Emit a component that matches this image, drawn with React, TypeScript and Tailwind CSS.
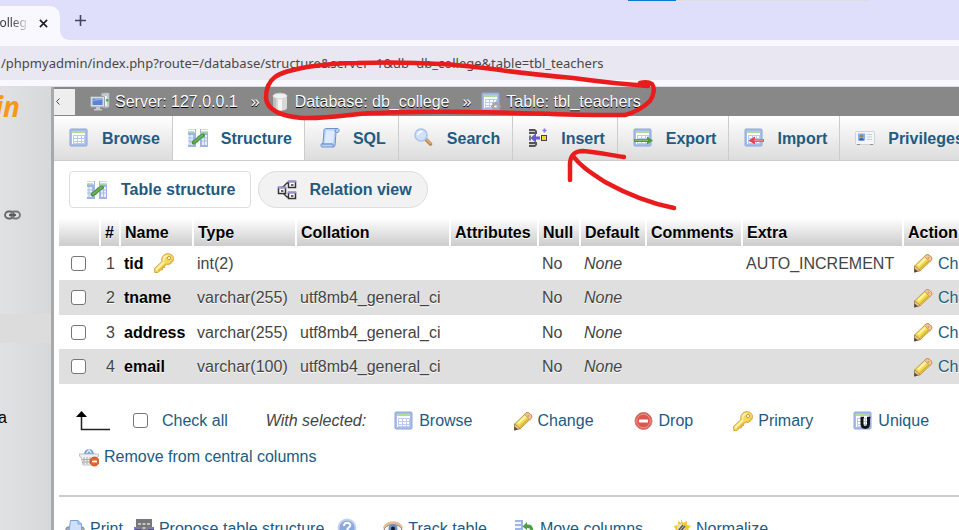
import type { ReactNode } from "react";

const sans = "font-['Liberation_Sans',Arial,sans-serif]";
const segoe = "font-['Noto_Sans','Open_Sans',sans-serif]";

function Svg({ children, className = "size-5" }: { children: ReactNode; className?: string }) {
  return (
    <svg viewBox="0 0 20 20" className={`${className} shrink-0`} fill="none" aria-hidden="true">
      {children}
    </svg>
  );
}

function Sheet() {
  return (
    <>
      <rect x="1" y="1" width="17" height="17" rx="1" fill="#a9bde8" stroke="#8ea6dc" />
      <rect x="3" y="3" width="13" height="13" fill="#fff" />
      <path d="M3 4h13" stroke="#8fcf7c" strokeWidth="1.5" />
      <path d="M4 7h12v9H4z" fill="#b9cbf0" />
      <path d="M5 8h3v2H5zM9 8h3v2H9zM13 8h2v2h-2zM5 11h3v2H5zM9 11h3v2H9zM13 11h2v2h-2zM5 14h3v1H5zM9 14h3v1H9zM13 14h2v1h-2z" fill="#fff" />
    </>
  );
}

const BrowseIcon = () => (
  <Svg>
    <Sheet />
  </Svg>
);

const StructureIcon = () => (
  <Svg>
    <rect x="0" y="1" width="8" height="18" fill="#9db4e4" />
    <rect x="12" y="1" width="8" height="18" fill="#9db4e4" />
    <path d="M0 3h7M13 3h7" stroke="#fff" strokeWidth="3" />
    <path d="M0 4h6M13 4h7" stroke="#7fc66b" strokeWidth="1.2" />
    <path d="M0 7h5v10H0zM14 7h5v10h-5z" fill="#e9effb" />
    <path d="M0 10h5M0 13h5M14 10h5M14 13h5M2 7v10M16.500 7v10" stroke="#9db4e4" strokeWidth=".8" />
    <path d="M5.500 14.500l3-2 3.500-3.500 3-1.500" stroke="#4d9540" strokeWidth="4" strokeLinecap="round" strokeLinejoin="round" />
    <path d="M6 14l3-2 3.500-3.500 2-1" stroke="#72b765" strokeWidth="1.500" strokeLinecap="round" />
  </Svg>
);

const SqlIcon = () => (
  <Svg>
    <path d="M4 2c0-1 1-1.500 2-1.500h12c1.500.5 1.500 4-.5 4h-1.500L15 17.500c0 1-1 1.500-2 1.500H2c-1.500-.5-1.500-3 0-3.500h1z" fill="#b9d1f6" stroke="#6f92cf" />
    <path d="M6 2.500h8.500L13 15H4.500z" fill="#deeafd" />
    <path d="M2 16h10.500c1 .5 1 2.500 0 3M16 4.500c-1.200-.5-1-3 .5-3.500" stroke="#5d82c6" />
  </Svg>
);

const SearchIcon = () => (
  <Svg>
    <path d="M12 11.500l4.500 4.500" stroke="#b98245" strokeWidth="3.600" strokeLinecap="round" />
    <path d="M12.500 11.500l4 4" stroke="#e0b27c" strokeWidth="1.500" strokeLinecap="round" />
    <circle cx="7" cy="7" r="6" fill="#cfe2fb" stroke="#a9c3ea" strokeWidth="1.500" />
    <path d="M4 6.500C4.500 4.500 6 3.500 8 3.500" stroke="#fff" strokeWidth="1.500" strokeLinecap="round" />
  </Svg>
);

const InsertIcon = () => (
  <Svg>
    <path d="M1 1h6l2 2v3H1zM1 14h8v3l-2 2H1z" fill="#555" />
    <path d="M1 3.500h6M1 16.500h6" stroke="#ccc" />
    <path d="M1 7.500h2v5H1z" fill="#777" />
    <path d="M2.500 10l5.500-5v3.500h4v3H8V15z" fill="#6a5acd" />
    <rect x="13" y="7" width="6" height="6" fill="#444" />
    <rect x="14" y="8" width="4" height="4" fill="#ffd42a" />
    <path d="M16.500 0.500v4M14.500 2.500h4" stroke="#8a7be0" strokeWidth="1.600" />
  </Svg>
);

const ExportIcon = () => (
  <Svg>
    <Sheet />
    <path d="M1 11h13V8.500l6 4-6 4V14H1z" fill="#4b9a3f" />
    <path d="M2 12.200h13" stroke="#8fd07f" />
  </Svg>
);

const ImportIcon = () => (
  <Svg>
    <Sheet />
    <path d="M20 11.200h-9V8.500l-6.500 4 6.500 4v-2.700h9z" fill="#e0455b" />
    <path d="M19 12.300h-9" stroke="#f59aa6" />
  </Svg>
);

const PrivilegesIcon = () => (
  <Svg>
    <rect x=".5" y="3.500" width="19" height="13" rx="1" fill="#f3f5f8" stroke="#cfd3da" />
    <path d="M2 16.500h3M15 16.500h3" stroke="#8a8f99" />
    <rect x="3" y="5.500" width="7" height="7" fill="#7fb0ea" />
    <circle cx="6.500" cy="8" r="1.600" fill="#b9793c" />
    <path d="M4 12.500c0-3.500 5-3.500 5 0z" fill="#2e66a8" />
    <path d="M12 6.500h5M12 9h5M12 11.500h5" stroke="#c3cfe0" />
  </Svg>
);

const RelationIcon = () => (
  <Svg>
    <path d="M5 8l5-5h2M5 12l5 5h2" stroke="#333" strokeWidth="1.300" />
    <path d="M11.500 1.500h7v6h-7zM11.500 12.500h7v6h-7zM1.500 7.500h7v6h-7z" fill="#fff" stroke="#333" strokeWidth="1.500" />
    <path d="M11 1.500h8M11 12.500h8M1 7.500h8" stroke="#9b8fcf" strokeWidth="2" />
    <path d="M14 5h2.500M14 16h2.500M4 11h2.500" stroke="#333" strokeWidth="1.500" />
  </Svg>
);

const ServerIcon = () => (
  <Svg>
    <path d="M11 1l7-.5 1.500 1v13L18 16h-6z" fill="#c5cad0" stroke="#8e959c" />
    <path d="M16 4v10" stroke="#eef0f2" strokeWidth="2" />
    <rect x="16" y="7" width="2.500" height="2.500" fill="#3eb34a" />
    <rect x=".5" y="4.500" width="14" height="10.500" rx="1" fill="#d9dde2" stroke="#9aa1a9" />
    <rect x="2.500" y="6.500" width="10" height="6.500" fill="#5b83cf" />
    <path d="M3 9c3-2 6-1 9-2" stroke="#8eaee6" strokeWidth="1.500" />
    <path d="M6 15h4v2H6zM4 17h8v1.500H4z" fill="#c5cad0" />
  </Svg>
);

const DatabaseIcon = () => (
  <Svg>
    <path d="M3 4v12c0 3.500 14 3.500 14 0V4z" fill="#d8d8d8" />
    <path d="M6 6v12c-2-.5-3-1-3-2V4z" fill="#bdbdbd" />
    <path d="M8 6v12.500h4V6z" fill="#f4f4f4" />
    <ellipse cx="10" cy="4" rx="7" ry="2.800" fill="#f1f1f1" stroke="#cfcfcf" strokeWidth=".8" />
  </Svg>
);

const TableIcon = () => (
  <Svg>
    <Sheet />
    <circle cx="15" cy="14.500" r="3" stroke="#a6a6a6" strokeWidth="2.400" />
    <path d="M15 9.500v2M15 17.500V20M10 14.500h2M18 14.500h2M11.500 11l1.400 1.400M17.100 16.600l1.500 1.500M18.500 11l-1.400 1.400M12.900 16.600l-1.400 1.500" stroke="#a6a6a6" strokeWidth="1.600" />
  </Svg>
);

const KeyIcon = () => (
  <Svg>
    <path d="M12 1c3-1.500 7.500 1 7.500 4.500 0 4-4 6.500-7 6l-2 1 .3 2-2.300.2.200 2-2.200.3L4 19.500H.8L.5 15.500 8 8.500C7 5 9 2 12 1z" fill="#f6d95c" stroke="#d3a646" />
    <path d="M2.500 16.500l7-7M9.700 7c0-2.500 1.800-3.800 3.800-4.100" stroke="#fdf2ae" strokeWidth="1.800" strokeLinecap="round" />
    <path d="M4 18.500l6-6 3-1.500c3 0 5-2 5.300-4" stroke="#e2b63e" strokeWidth="1.200" />
    <circle cx="15" cy="5" r="1.600" fill="#fff" stroke="#c9993a" />
  </Svg>
);

const PencilIcon = () => (
  <Svg>
    <path d="M1.500 13L13 2c2-1.500 7 2 5.500 5L7.500 17.500 1.500 19z" fill="#f0dc45" stroke="#c8965a" />
    <path d="M5 12.500L13.500 4.500" stroke="#fbf4ab" strokeWidth="2.200" />
    <path d="M7 16L16.500 7" stroke="#d6b234" strokeWidth="1.400" />
    <path d="M11.500 3.300L13 2c2-1.500 7 2 5.500 5l-1.700 1.700z" fill="#f2c9a0" stroke="#c8965a" />
    <circle cx="15.500" cy="4.800" r="1.100" fill="#d99c6c" />
    <path d="M1.500 12.800l6 4.700L1.500 19z" fill="#e8c696" stroke="#a97c45" strokeWidth=".8" />
    <path d="M1.300 15.500l3.700 2.700-3.700 1.200z" fill="#54493a" />
  </Svg>
);

const DropIcon = () => (
  <Svg>
    <circle cx="9.500" cy="10" r="8.500" fill="#dd554c" stroke="#cf7b77" />
    <circle cx="9.500" cy="10" r="6.800" stroke="#ee9a94" />
    <rect x="5" y="8.500" width="9" height="3" rx=".5" fill="#fff" />
  </Svg>
);

const UniqueIcon = () => (
  <Svg>
    <Sheet />
    <path d="M9 7v6c0 4.500 6.500 4.500 6.500 0V7" stroke="#151515" strokeWidth="3" />
    <path d="M7.500 6.500h3.500M14 6.500h3.500" stroke="#151515" strokeWidth="1.500" />
  </Svg>
);

const BasketIcon = () => (
  <Svg>
    <path d="M5 8c0-8 10-8 10 0z" fill="#6f9fd0" />
    <path d="M7.500 6l2.500-3 2.500 3" stroke="#dceafa" strokeWidth="1.500" />
    <path d="M0 7h20l-1 3h-1l-1 8H4L2 10H1z" fill="#efefef" stroke="#b5b5b5" strokeWidth=".8" />
    <path d="M5 10v7M8 10v7M11 10v7M14 10v5M3 12.500h12M3.500 15h11" stroke="#adadad" />
    <circle cx="15.500" cy="14.500" r="4.500" fill="#e4642a" stroke="#c04e1b" strokeWidth=".8" />
    <path d="M13 14.500h5" stroke="#fff" strokeWidth="1.800" />
  </Svg>
);

const PrintIcon = () => (
  <Svg>
    <rect x="1" y="8" width="18" height="9" rx="2" fill="#a9adb8" stroke="#7c818e" />
    <path d="M4 12l1.500-10.500H13L16.500 5v7z" fill="#cfe0fa" stroke="#7d9fd8" />
    <path d="M13 1.500V5h3.500" stroke="#7d9fd8" />
  </Svg>
);

const ProposeIcon = () => (
  <Svg>
    <rect x="2" y="0" width="16" height="13" fill="#777" />
    <path d="M4 4h3v2H4zM8.500 4h3v2h-3zM13 4h3v2h-3zM4 8h3v2H4zM8.500 8h3v2h-3zM13 8h3v2h-3z" fill="#c4c4c4" />
    <path d="M0 8h7v11H0zM13 8h7v11h-7z" fill="#7f78b8" />
    <path d="M1 10.500h6v8H1zM14 10.500h6v8h-6z" fill="#333" />
  </Svg>
);

const HelpIcon = () => (
  <Svg>
    <circle cx="10" cy="10" r="8.500" fill="#8ba9de" stroke="#c3d1ee" strokeWidth="1.800" />
    <path d="M7 8c0-4.500 6.300-4 6.300-.8 0 2.300-3.100 2.300-3.100 4.800" stroke="#fff" strokeWidth="2" />
    <circle cx="10.200" cy="14.500" r="1.200" fill="#fff" />
  </Svg>
);

const EyeIcon = () => (
  <Svg>
    <path d="M0 8C4 1 15 0 20 8l-1 3C14 5 5 5 1 11z" fill="#e2bd98" />
    <path d="M1 10C5 4 15 4 19 10c-4 6-14 6-18 0z" fill="#f4f4f6" stroke="#9c8e85" />
    <circle cx="10" cy="9.500" r="4.500" fill="#6f8fc4" />
    <circle cx="10" cy="9.500" r="2" fill="#16202e" />
  </Svg>
);

const MoveIcon = () => (
  <Svg>
    <rect x="0" y="1" width="8" height="18" fill="#9db4e4" />
    <path d="M0 3h6v2H0zM0 7h6v2H0zM0 11h6v2H0z" fill="#f1f5fd" />
    <path d="M12 3L7.500 7.500 12 11V9c3-.5 4 2 4 6h2.500c0-7-1.500-10-6.500-9.500z" fill="#4f9d44" />
  </Svg>
);

const NormalizeIcon = () => (
  <Svg>
    <path d="M10 0l2 4 4-2v4l4 1-3 3 3 3-4 1-1 4-4-2-3 3-1-4-4-1 2-3-2-4 4-1V2l3 2z" fill="#f2c92e" />
    <circle cx="10" cy="9" r="4" fill="#e5e1c8" />
    <path d="M7 12l5-6M9 13l5-6" stroke="#555" strokeWidth="1.500" />
  </Svg>
);

const tabs: { label: string; icon: ReactNode; active?: boolean }[] = [
  { label: "Browse", icon: <BrowseIcon /> },
  { label: "Structure", icon: <StructureIcon />, active: true },
  { label: "SQL", icon: <SqlIcon /> },
  { label: "Search", icon: <SearchIcon /> },
  { label: "Insert", icon: <InsertIcon /> },
  { label: "Export", icon: <ExportIcon /> },
  { label: "Import", icon: <ImportIcon /> },
  { label: "Privileges", icon: <PrivilegesIcon /> },
];

const headings = [
  { label: "#", width: "min-w-5" },
  { label: "Name", width: "min-w-[73px]" },
  { label: "Type", width: "min-w-[103px]" },
  { label: "Collation", width: "min-w-[154px]" },
  { label: "Attributes", width: "min-w-[88px]" },
  { label: "Null", width: "min-w-[42px]" },
  { label: "Default", width: "min-w-[66px]" },
  { label: "Comments", width: "min-w-[96px]" },
  { label: "Extra", width: "min-w-[161px]" },
  { label: "Action", width: "min-w-[120px]" },
];

const rows = [
  { name: "tid", primary: true, type: "int(2)", collation: "", extra: "AUTO_INCREMENT" },
  { name: "tname", primary: false, type: "varchar(255)", collation: "utf8mb4_general_ci", extra: "" },
  { name: "address", primary: false, type: "varchar(255)", collation: "utf8mb4_general_ci", extra: "" },
  { name: "email", primary: false, type: "varchar(100)", collation: "utf8mb4_general_ci", extra: "" },
];

const checkbox =
  "block size-[15px] shrink-0 appearance-none rounded-[3px] border border-[#767676] bg-white checked:bg-[#235a81]";

function IconLink({ icon, label }: { icon: ReactNode; label: string }) {
  return (
    <a href="#" className="flex items-center gap-[5px] text-[#235a81]">
      {icon}
      {label}
    </a>
  );
}

function BrowserChrome() {
  return (
    <header className={`${segoe} text-[#474747]`}>
      <div className="relative flex h-10 items-end bg-[#dfdffb]">
        <div className="absolute left-[628px] top-0 flex h-px w-[241px] bg-[#dcdce6]">
          <span className="w-12 bg-[#0a78d4]" />
        </div>
        <div className="flex h-[34px] w-[60px] items-center rounded-tr-[10px] bg-[#f8f8fe]">
          <span className="flex w-[27px] justify-end overflow-hidden bg-linear-to-r from-[#333] from-40% to-[#ddd] bg-clip-text text-[12px] leading-5 text-transparent">
            colleg
          </span>
          <button aria-label="Close tab" className="ml-3 text-[#1f1f1f]">
            <svg viewBox="0 0 10 10" className="size-[9px]" aria-hidden="true">
              <path d="M1 1l8 8M9 1L1 9" stroke="currentColor" strokeWidth="1.800" />
            </svg>
          </button>
        </div>
        <svg viewBox="0 0 10 10" className="size-[10px]" aria-hidden="true">
          <path d="M0 0v10h10C4 10 0 6 0 0z" fill="#f8f8fe" />
        </svg>
        <button aria-label="New tab" className="mb-[14px] ml-[5px] text-[#44445a]">
          <svg viewBox="0 0 11 11" className="size-[11px]" aria-hidden="true">
            <path d="M5.500 0v11M0 5.500h11" stroke="currentColor" strokeWidth="1.600" />
          </svg>
        </button>
      </div>
      <div className="border-b border-[#dcdce2] bg-[#f8f8fe] pb-[6px] pt-[6px]">
        <div className="flex h-[34px] items-center overflow-hidden whitespace-nowrap bg-[#e9e8f2] pl-px text-[13px]">
          /phpmyadmin/index.php?route=/database/structure&amp;server=1&amp;db=db_college&amp;table=tbl_teachers
        </div>
      </div>
    </header>
  );
}

function Sidebar() {
  return (
    <aside className="flex w-[54px] shrink-0 flex-col overflow-hidden border-r-[3px] border-[#a9a9a9] bg-linear-to-r from-[#e0e1e3] to-[#d6d8da] text-black">
      <div className={`${segoe} flex w-5 justify-end pt-px text-[28px] font-bold italic leading-9 text-[#f29a18]`}>in</div>
      <a href="#" aria-label="Unlink from main panel" className="ml-1 mt-[86px]">
        <svg viewBox="0 0 17 11" className="h-[11px] w-[17px]" fill="none" aria-hidden="true">
          <rect x="1" y="1.500" width="9" height="7" rx="3.500" stroke="#666" strokeWidth="1.800" />
          <rect x="7" y="1.500" width="9" height="7" rx="3.500" stroke="#777" strokeWidth="1.800" />
          <path d="M5 5h7" stroke="#555" strokeWidth="1.800" />
        </svg>
      </a>
      <div className="mt-[93px] h-[29px] shrink-0 bg-[#dcdcdc]" />
      <span className="mt-16 flex w-[7px] justify-end">a</span>
    </aside>
  );
}

function Breadcrumb() {
  return (
    <nav className="flex h-[29px] items-center bg-[#888] text-white [text-shadow:0_1px_0_#000]">
      <button aria-label="Hide panel" className="flex h-[26px] w-[21px] items-center bg-[#eee] pl-[2px] text-[#444]">
        <svg viewBox="0 0 4 7" className="h-[7px] w-1" fill="none" aria-hidden="true">
          <path d="M3.500.5l-3 3 3 3" stroke="currentColor" />
        </svg>
      </button>
      <a href="#" className="ml-[15px] flex items-center gap-[5px]">
        <ServerIcon /> Server: 127.0.0.1
      </a>
      <span className="ml-[13px] mr-[10px]">»</span>
      <a href="#" className="flex items-center gap-[5px]">
        <DatabaseIcon /> Database: db_college
      </a>
      <span className="ml-[13px] mr-[10px]">»</span>
      <a href="#" className="flex items-center gap-[5px]">
        <TableIcon /> Table: tbl_teachers
      </a>
    </nav>
  );
}

function ColumnsTable() {
  return (
    <table className="ml-[5px] mt-[10px] border-collapse whitespace-nowrap text-left text-[#444] [text-shadow:0_1px_0_#fff]">
      <thead>
        <tr className="h-[28px] text-black">
          <th className="min-w-[41px] border-r-2 border-white bg-linear-to-b from-white to-[#ccc]">
            <span className="sr-only">Select</span>
          </th>
          {headings.map((h) => (
            <th key={h.label} className={`${h.width} border-r-2 border-white bg-linear-to-b from-white to-[#ccc] px-1 font-bold`}>
              {h.label}
            </th>
          ))}
        </tr>
      </thead>
      <tbody>
        {rows.map((r, i) => (
          <tr key={r.name} className="odd:h-[34px] even:h-[35px] even:bg-[#dfdfdf]">
            <td className="pl-3">
              <input type="checkbox" aria-label={`Select ${r.name}`} className={checkbox} />
            </td>
            <td className="pr-[5px] text-right">{i + 1}</td>
            <th className="px-1 font-bold text-black">
              <span className="flex items-center gap-[10px]">
                {r.name}
                {r.primary && <KeyIcon />}
              </span>
            </th>
            <td className="px-1">{r.type}</td>
            <td className="px-1">{r.collation}</td>
            <td />
            <td className="px-1">No</td>
            <td className="px-1 italic">None</td>
            <td />
            <td className="px-1">{r.extra}</td>
            <td className="pl-[10px]">
              <IconLink icon={<PencilIcon />} label="Change" />
            </td>
          </tr>
        ))}
      </tbody>
    </table>
  );
}

export default function App() {
  return (
    <div className={`${sans} relative flex h-screen flex-col overflow-hidden bg-white text-[16px] leading-[21px]`}>
      <BrowserChrome />
      <div className="flex min-h-0 flex-1">
        <Sidebar />
        <main className="min-w-0 flex-1 overflow-hidden">
          <Breadcrumb />
          <nav className="flex overflow-hidden whitespace-nowrap border-b border-[#ccc] bg-linear-to-b from-white to-[#dcdcdc] font-bold text-[#235a81]">
            {tabs.map((t) => (
              <a
                key={t.label}
                href="#"
                className={`${t.active ? "bg-white" : ""} flex h-11 shrink-0 items-center gap-[13px] border-r border-[#ccc] pl-[15px] pr-3`}
              >
                {t.icon}
                {t.label}
              </a>
            ))}
          </nav>
          <div className="ml-[15px] mt-[10px] flex gap-[7px] font-bold text-[#235a81]">
            <a href="#" className="flex h-[37px] items-center gap-[14px] rounded-[4px] border border-[#ddd] bg-white pl-[17px] pr-[15px]">
              <StructureIcon />
              Table structure
            </a>
            <a href="#" className="flex h-[37px] items-center gap-3 rounded-full border border-[#ddd] bg-[#f2f2f2] pl-[18px] pr-[15px]">
              <RelationIcon />
              Relation view
            </a>
          </div>
          <ColumnsTable />
          <div className="flex items-center whitespace-nowrap pl-[21px] pt-[26px]">
            <svg viewBox="0 0 36 20" className="h-5 w-9" fill="none" aria-hidden="true">
              <path d="M6.500 5v13.500H35" stroke="#222" strokeWidth="1.500" />
              <path d="M6.500 0L12 6H1z" fill="#000" />
            </svg>
            <label className="ml-[22px] flex items-center gap-[14px] text-[#235a81]">
              <input type="checkbox" className={checkbox} />
              Check all
            </label>
            <i className="ml-[38px] text-[#444]">With selected:</i>
            <div className="ml-7 flex gap-10">
              <IconLink icon={<BrowseIcon />} label="Browse" />
              <IconLink icon={<PencilIcon />} label="Change" />
              <IconLink icon={<DropIcon />} label="Drop" />
              <IconLink icon={<KeyIcon />} label="Primary" />
              <IconLink icon={<UniqueIcon />} label="Unique" />
            </div>
          </div>
          <div className="flex pl-[25px] pt-[15px]">
            <IconLink icon={<BasketIcon />} label="Remove from central columns" />
          </div>
          <hr className="ml-[5px] mt-7 border-t-2 border-[#ccc]" />
          <div className="flex whitespace-nowrap pl-[11px] pt-[21px]">
            <IconLink icon={<PrintIcon />} label="Print" />
            <span className="ml-[11px]">
              <IconLink icon={<ProposeIcon />} label="Propose table structure" />
            </span>
            <a href="#" aria-label="Documentation" className="ml-[13px]">
              <HelpIcon />
            </a>
            <div className="ml-[26px] flex gap-[28px]">
              <IconLink icon={<EyeIcon />} label="Track table" />
              <IconLink icon={<MoveIcon />} label="Move columns" />
              <IconLink icon={<NormalizeIcon />} label="Normalize" />
            </div>
          </div>
        </main>
      </div>
      <svg
        viewBox="0 0 959 530"
        className="pointer-events-none absolute left-0 top-0 h-[530px] w-[959px]"
        fill="none"
        stroke="#e81c1c"
        strokeWidth="4.500"
        strokeLinecap="round"
        strokeLinejoin="round"
        aria-hidden="true"
      >
        <path d="M648 86C620 84 595 81 573 78C550 76 530 74 507 71C485 68 462 65 440 64C410 62 385 62 357 63C335 63 320 65 307 67C292 70 282 72 275 77C268 82 266 90 266 98C267 110 280 116 302 118C330 119 350 114 372 113C410 112 430 111 470 112C520 112 570 116 625 115C636 112 645 106 650 101C654 95 655 88 652 84C649 82 644 82 640 83" />
        <path d="M570 180V163C571 154 575 151 583 151C596 152 610 155 624 157M573 156C582 168 593 174 605 182C625 193 648 203 674 208" />
      </svg>
    </div>
  );
}
